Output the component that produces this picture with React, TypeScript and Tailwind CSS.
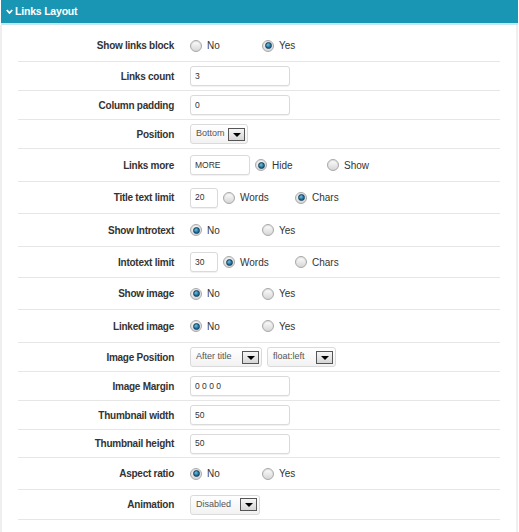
import React from "react";

type Row = {
  label: string;
  h: string;
  control: React.ReactNode;
};

function Radio({ checked }: { checked?: boolean }) {
  return (
    <span className="w-[12px] h-[12px] rounded-full border border-[#a8a8a8] bg-gradient-to-b from-[#fefefe] to-[#d6d6d6] shadow-[inset_0_1px_1px_rgba(0,0,0,0.12)] flex items-center justify-center shrink-0">
      {checked && (
        <span className="w-[7px] h-[7px] rounded-full border border-[#0f3e5c] bg-[radial-gradient(circle_at_40%_35%,#6fc0e6,#1a6690_65%)]" />
      )}
    </span>
  );
}

function Opt({ label, checked }: { label: string; checked?: boolean }) {
  return (
    <div className="w-[67px] flex items-center gap-[5px] text-[10px] text-[#333]">
      <Radio checked={checked} />
      <span>{label}</span>
    </div>
  );
}

function TextInput({ value, w }: { value: string; w: string }) {
  return (
    <div
      className={`${w} h-[20px] rounded-[3px] border border-[#dadada] bg-white shadow-[0_1px_1px_rgba(0,0,0,0.06)] flex items-center px-[4px] text-[8.5px] text-[#333]`}
    >
      {value}
    </div>
  );
}

function Select({ value, w }: { value: string; w: string }) {
  return (
    <div
      className={`${w} h-[20px] rounded-[3px] border border-[#dadada] bg-gradient-to-b from-white to-[#f2f2f2] flex items-center pl-[5px] pr-[2px] text-[9px] text-[#555]`}
    >
      <span className="flex-1 whitespace-nowrap">{value}</span>
      <span className="w-[17px] h-[13px] border border-[#555] bg-gradient-to-b from-[#f6f6f6] to-[#d6d6d6] flex items-center justify-center shrink-0">
        <span className="w-0 h-0 border-x-[4px] border-x-transparent border-t-[4px] border-t-black mt-[1px]" />
      </span>
    </div>
  );
}

const rows: Row[] = [
  { label: "Show links block", h: "h-[32px]", control: <><Opt label="No" /><Opt label="Yes" checked /></> },
  { label: "Links count", h: "h-[29px]", control: <TextInput value="3" w="w-[100px]" /> },
  { label: "Column padding", h: "h-[29px]", control: <TextInput value="0" w="w-[100px]" /> },
  { label: "Position", h: "h-[29px]", control: <Select value="Bottom" w="w-[58px]" /> },
  {
    label: "Links more",
    h: "h-[33px]",
    control: <><TextInput value="MORE" w="w-[60px]" /><Opt label="Hide" checked /><Opt label="Show" /></>,
  },
  {
    label: "Title text limit",
    h: "h-[32px]",
    control: <><TextInput value="20" w="w-[28px]" /><Opt label="Words" /><Opt label="Chars" checked /></>,
  },
  { label: "Show Introtext", h: "h-[33px]", control: <><Opt label="No" checked /><Opt label="Yes" /></> },
  {
    label: "Intotext limit",
    h: "h-[31px]",
    control: <><TextInput value="30" w="w-[28px]" /><Opt label="Words" checked /><Opt label="Chars" /></>,
  },
  { label: "Show image", h: "h-[32px]", control: <><Opt label="No" checked /><Opt label="Yes" /></> },
  { label: "Linked image", h: "h-[33px]", control: <><Opt label="No" checked /><Opt label="Yes" /></> },
  {
    label: "Image Position",
    h: "h-[29px]",
    control: <><Select value="After title" w="w-[72px]" /><Select value="float:left" w="w-[69px]" /></>,
  },
  { label: "Image Margin", h: "h-[29px]", control: <TextInput value="0 0 0 0" w="w-[100px]" /> },
  { label: "Thumbnail width", h: "h-[29px]", control: <TextInput value="50" w="w-[100px]" /> },
  { label: "Thumbnail height", h: "h-[28px]", control: <TextInput value="50" w="w-[100px]" /> },
  { label: "Aspect ratio", h: "h-[32px]", control: <><Opt label="No" checked /><Opt label="Yes" /></> },
  { label: "Animation", h: "h-[30px]", control: <Select value="Disabled" w="w-[70px]" /> },
];

export default function App() {
  return (
    <div className="w-[519px] min-h-[532px] bg-white font-['Liberation_Sans',Arial,sans-serif]">
      {/* Header */}
      <div className="h-[25px] pl-[1px] pr-[1px]">
        <div className="h-[25px] bg-[#1896b4] border-b-2 border-[#c4e7f1] flex items-center gap-[2px] pl-[5px] text-white font-bold text-[10.5px] tracking-[-0.2px]">
          <svg width="7" height="6" viewBox="0 0 7 6" className="mt-[1px]">
            <path d="M0.8 1 L3.5 4 L6.2 1" fill="none" stroke="white" strokeWidth="1.8" />
          </svg>
          <span>Links Layout</span>
        </div>
      </div>

      {/* Body */}
      <div className="w-[518px] min-h-[507px] border-l-2 border-r-2 border-[#efefef] px-[16px] pt-[5px]">
        {rows.map((r) => (
          <div key={r.label} className={`${r.h} flex items-center border-b border-[#e6e6e6]`}>
            <div className="w-[156px] text-right font-bold text-[10px] tracking-[-0.25px] text-[#333] shrink-0">
              {r.label}
            </div>
            <div className="ml-[16px] flex items-center gap-[5px]">{r.control}</div>
          </div>
        ))}
      </div>
    </div>
  );
}
